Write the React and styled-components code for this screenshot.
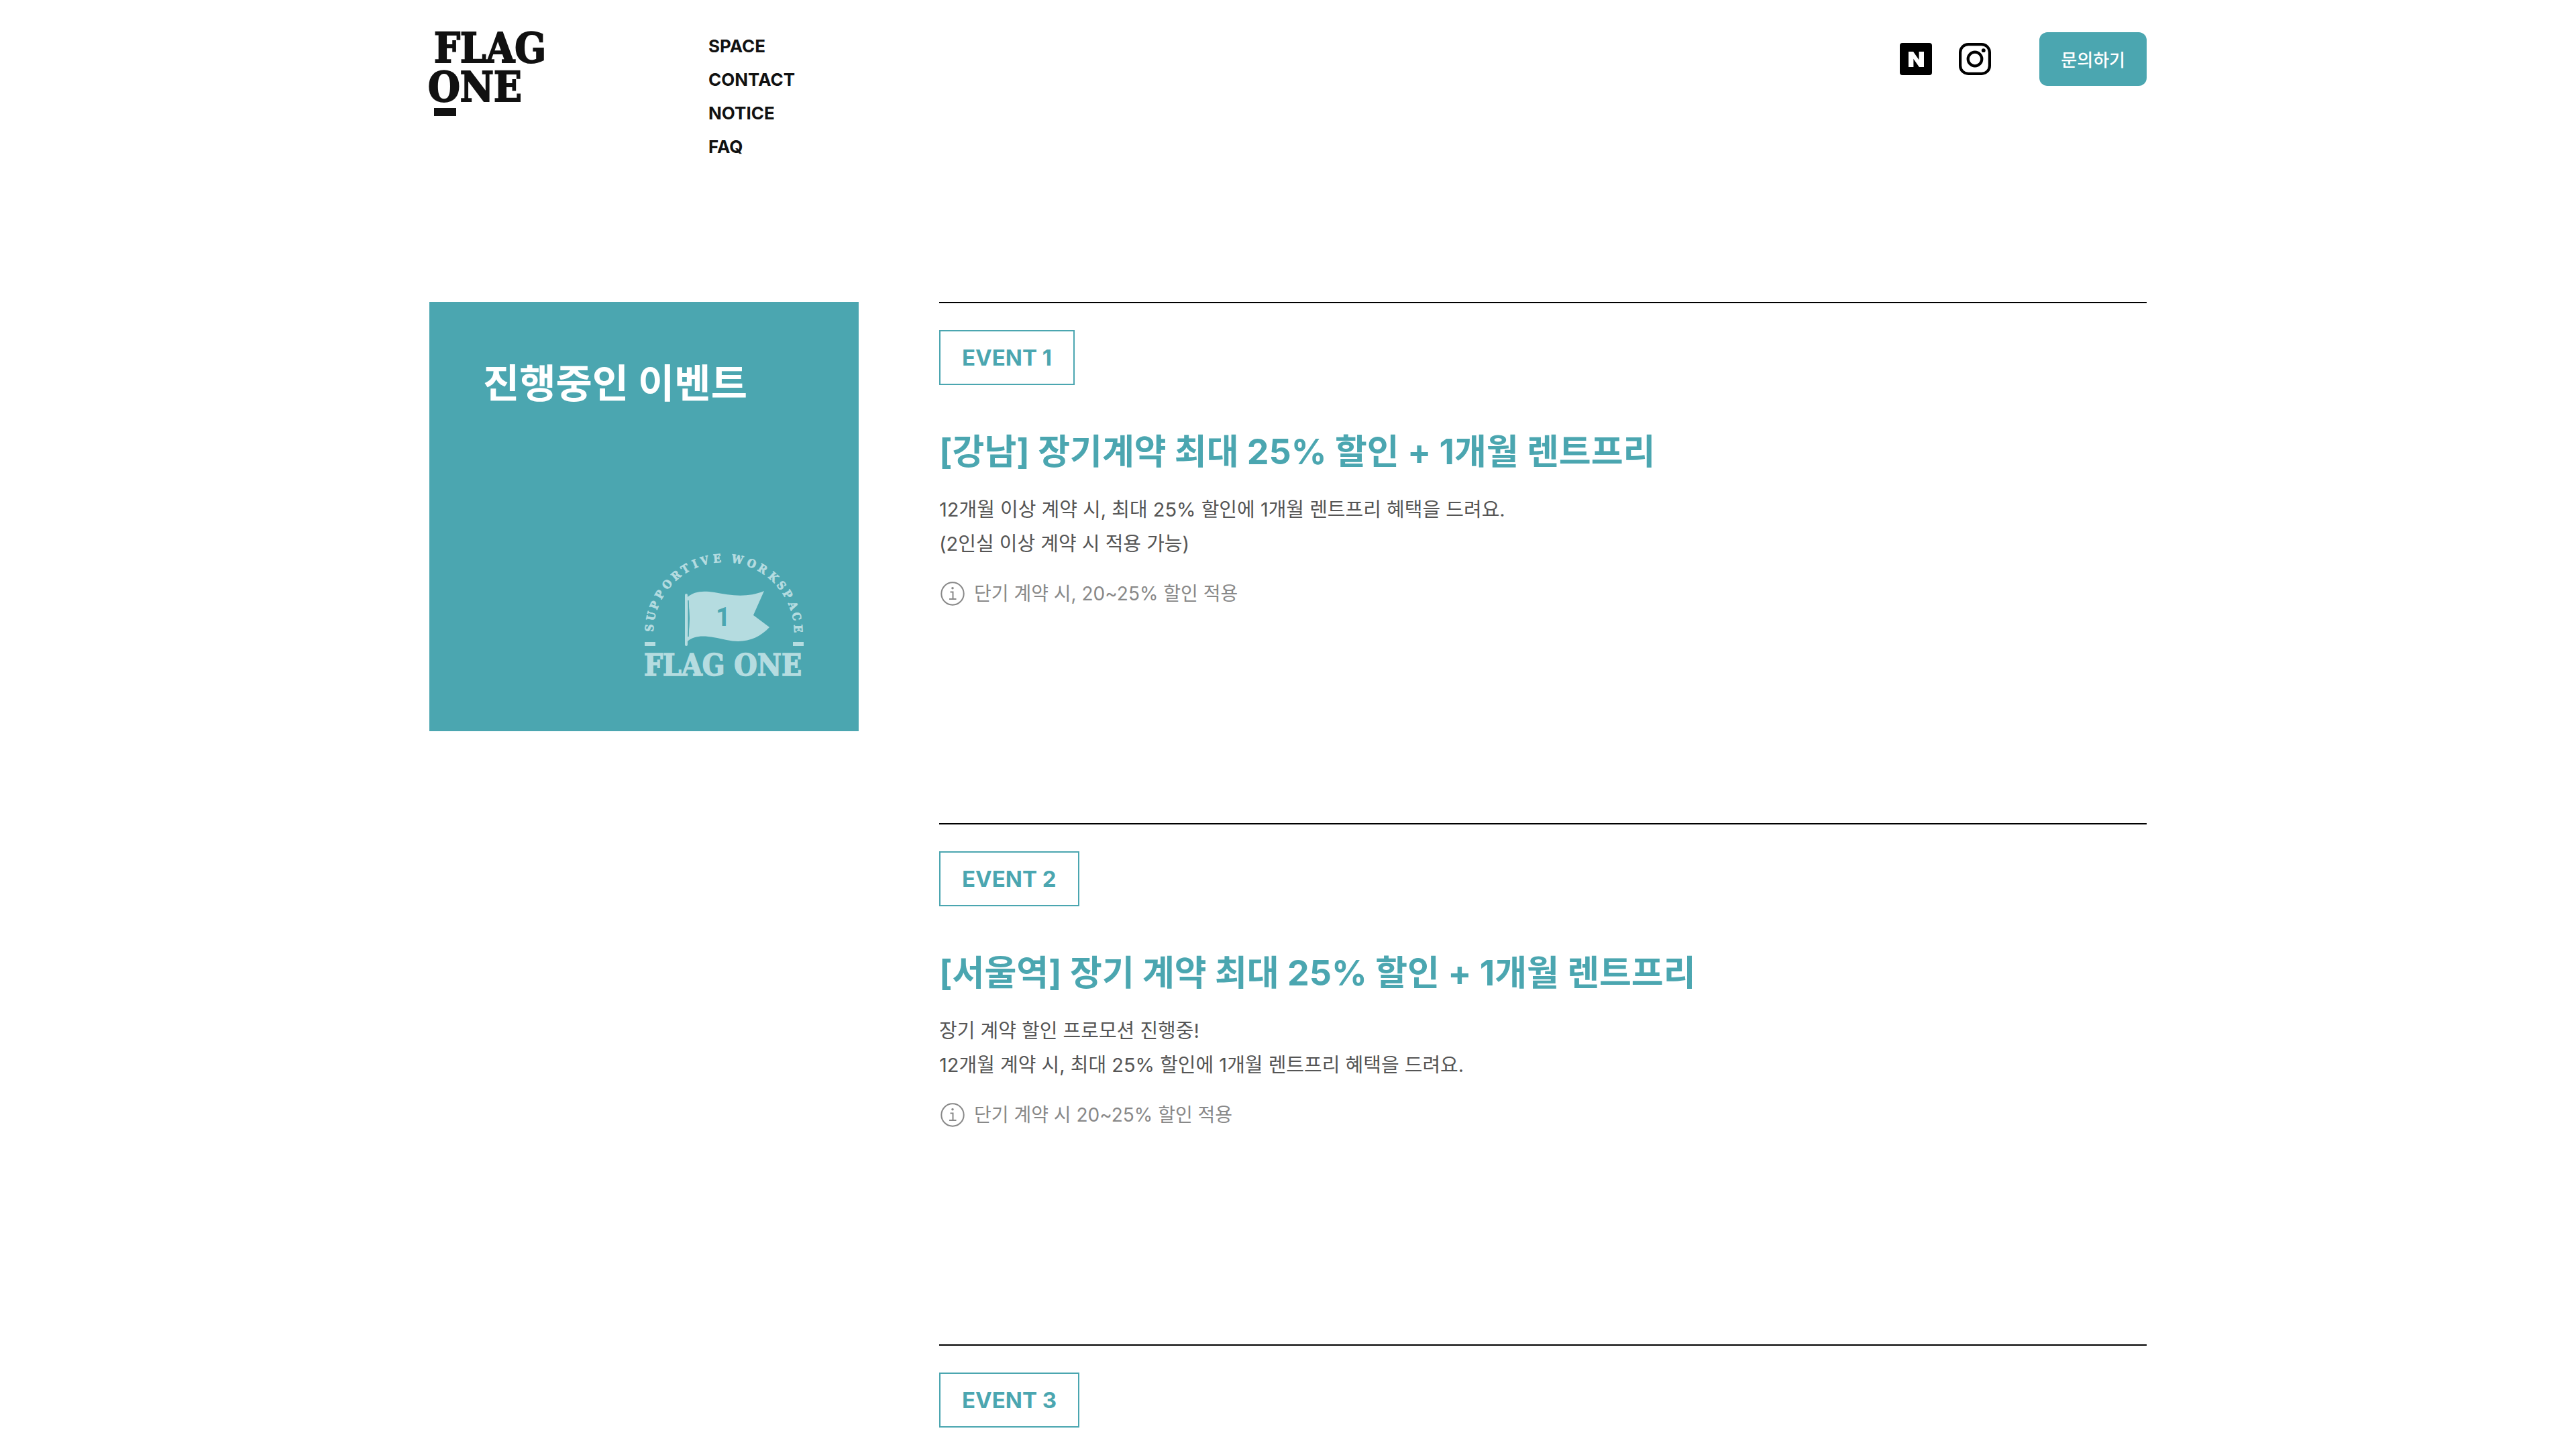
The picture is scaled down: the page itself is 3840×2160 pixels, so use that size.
import React from 'react';
import styled, { createGlobalStyle } from 'styled-components';
import { SiNaver } from 'react-icons/si';

const menus = ["SPACE", "CONTACT", "NOTICE", "FAQ"]

const events = [
    {
        id: 1,
        title: "[강남] 장기계약 최대 25% 할인 + 1개월 렌트프리",
        lines: [
            "12개월 이상 계약 시, 최대 25% 할인에 1개월 렌트프리 혜택을 드려요.",
            "(2인실 이상 계약 시 적용 가능)"
        ],
        note: "단기 계약 시, 20~25% 할인 적용"
    },
    {
        id: 2,
        title: "[서울역] 장기 계약 최대 25% 할인 + 1개월 렌트프리",
        lines: [
            "장기 계약 할인 프로모션 진행중!",
            "12개월 계약 시, 최대 25% 할인에 1개월 렌트프리 혜택을 드려요."
        ],
        note: "단기 계약 시 20~25% 할인 적용"
    },
    { id: 3 }
]

export default function App () {
    return (
        <>
            <GlobalStyle />
            <Header />
            <Main>
                <Side>
                    <SideTitle>진행중인 이벤트</SideTitle>
                    <Emblem />
                </Side>
                <EventList>
                    {events.map((event) => <Event key={event.id} event={event} />)}
                </EventList>
            </Main>
        </>
    )
}

function Header () {
    return (
        <HeaderBar>
            <LogoLink href="#" aria-label="FLAG ONE">
                <Logo />
            </LogoLink>
            <Nav>
                {menus.map((menu) => <NavLink key={menu} href={`#${menu.toLowerCase()}`}>{menu}</NavLink>)}
            </Nav>
            <Actions>
                <NaverLink href="#naver" aria-label="Naver">
                    <SiNaver />
                </NaverLink>
                <IconLink href="#instagram" aria-label="Instagram">
                    <InstagramIcon />
                </IconLink>
                <ContactButton type="button">문의하기</ContactButton>
            </Actions>
        </HeaderBar>
    )
}

function Event (props) {

    const { id, title, lines, note } = props.event

    return (
        <EventItem>
            <Badge>EVENT {id}</Badge>
            {title && (
                <>
                    <EventTitle>{title}</EventTitle>
                    <Description>
                        {lines.map((line) => <p key={line}>{line}</p>)}
                    </Description>
                    <Note>
                        <InfoIcon />
                        {note}
                    </Note>
                </>
            )}
        </EventItem>
    )
}

function Logo () {
    return (
        <LogoSvg width="180" height="128" viewBox="0 0 180 128" fill="#111" stroke="#111">
            <LogoText x="7" y="45" size={61} strokeWidth="2">FLAG</LogoText>
            <LogoText x="-2" y="103" size={61} strokeWidth="2">ONE</LogoText>
            <rect x="7" y="113" width="33" height="12" stroke="none" />
        </LogoSvg>
    )
}

function InstagramIcon () {
    return (
        <svg width="48" height="48" viewBox="0 0 48 48" fill="none" stroke="#000" strokeWidth="4.2">
            <rect x="2.1" y="2.1" width="43.8" height="43.8" rx="12" />
            <circle cx="24" cy="24" r="10.3" />
            <circle cx="36.8" cy="11.2" r="2.9" fill="#000" stroke="none" />
        </svg>
    )
}

function InfoIcon () {
    return (
        <svg width="40" height="40" viewBox="0 0 40 40" fill="none" stroke="#888" strokeWidth="2">
            <circle cx="20" cy="20" r="16.7" />
            <path d="M16.5 17.5h4V28M15 28h10.5" />
            <circle cx="20" cy="11.7" r="1.8" fill="#888" stroke="none" />
        </svg>
    )
}

// [letter, angle on the arc from the left end, advance in em]
const arc = [
    ["S", 3.6, .65], ["U", 12.8, .78], ["P", 21.6, .68], ["P", 30.8, .68], ["O", 40.4, .78],
    ["R", 50, .74], ["T", 58.9, .67], ["I", 67.2, .42], ["V", 75.1, .69], ["E", 84.8, .69],
    ["W", 100.5, 1.01], ["O", 111.9, .78], ["R", 121.4, .74], ["K", 131.7, .78], ["S", 140.7, .65],
    ["P", 149, .68], ["A", 158.8, .7], ["C", 167.5, .72], ["E", 176.9, .69]
]

function Emblem () {
    const size = 17
    const radius = 105
    const glyphs = arc.map(([letter, angle, advance]) => {
        const rad = angle * Math.PI / 180
        const half = advance * size / 2
        return {
            letter,
            x: 119 - radius * Math.cos(rad) - half * Math.sin(rad),
            y: 119 - radius * Math.sin(rad) + half * Math.cos(rad),
            rotate: angle - 90
        }
    })

    return (
        <EmblemSvg width="240" height="188" viewBox="0 -2 240 188" fill="#b5dce0">
            <LogoText
                size={size}
                stroke="#b5dce0"
                strokeWidth="0.7"
                x={glyphs.map((glyph) => glyph.x.toFixed(2)).join(" ")}
                y={glyphs.map((glyph) => glyph.y.toFixed(2)).join(" ")}
                rotate={glyphs.map((glyph) => glyph.rotate.toFixed(1)).join(" ")}
            >
                {glyphs.map((glyph) => glyph.letter).join("")}
            </LogoText>
            <rect x="1" y="133" width="16" height="6" />
            <rect x="222" y="133" width="16" height="6" />
            <rect x="61" y="61" width="4" height="78" rx="2" />
            <path d="M65 66C74 58 86 56 105 59C130 64 155 67 179 57L163 93L187 111C171 128 150 136 123 130C100 125 78 120 65 132Z" />
            <path d="M66 71Q69 98 66 125Z" fill="#4ba6b0" stroke="#4ba6b0" strokeWidth="1" />
            <FlagNumber x="118" y="109">1</FlagNumber>
            <LogoText x="0" y="183" size={44} stroke="#b5dce0" strokeWidth="1.4">FLAG ONE</LogoText>
        </EmblemSvg>
    )
}

//styled components

const GlobalStyle = createGlobalStyle `
    * {
        box-sizing: border-box;
        margin: 0;
        padding: 0;
    }

    body {
        background: #fff;
        color: #111;
        font-family: Inter, "Noto Sans CJK KR", sans-serif;
    }

    a {
        color: inherit;
        text-decoration: none;
    }
`

const HeaderBar = styled.header `
    display: flex;
    align-items: flex-start;
    max-width: 2560px;
    margin: 0 auto;
    padding-top: 48px;
`

const LogoLink = styled.a `
    width: 416px;
`

const LogoSvg = styled.svg `
    display: block;
    overflow: visible;
`

const LogoText = styled.text `
    font-family: "DejaVu Serif Condensed", "DejaVu Serif", serif;
    font-size: ${props => props.size}px;
    font-weight: 700;
`

const Nav = styled.nav `
    display: flex;
    flex-direction: column;
    margin-top: -4px;
`

const NavLink = styled.a `
    font-size: 26px;
    font-weight: 700;
    line-height: 50px;
`

const Actions = styled.div `
    display: flex;
    align-items: center;
    gap: 40px;
    margin-left: auto;
`

const IconLink = styled.a `
    display: flex;
    align-items: center;
    justify-content: center;
    width: 48px;
    height: 48px;
`

const NaverLink = styled(IconLink) `
    background: #000;
    border-radius: 4px;
    color: #fff;
    font-size: 23px;
`

const ContactButton = styled.button `
    height: 80px;
    margin-left: 32px;
    padding: 0 32px 2px;
    border: none;
    border-radius: 12px;
    background: #4ba6b0;
    color: #fff;
    font-family: inherit;
    font-size: 26px;
    font-weight: 500;
`

const Main = styled.main `
    display: grid;
    grid-template-columns: 25% 1fr;
    gap: 120px;
    align-items: start;
    max-width: 2560px;
    margin: 206px auto 0;
`

const Side = styled.aside `
    display: flex;
    flex-direction: column;
    justify-content: space-between;
    aspect-ratio: 1;
    padding: 80px;
    background: #4ba6b0;
`

const SideTitle = styled.h1 `
    color: #fff;
    font-size: 59px;
    font-weight: 700;
    line-height: 84px;
`

const EmblemSvg = styled.svg `
    align-self: flex-end;
    overflow: visible;
`

const FlagNumber = styled.text `
    fill: #4ba6b0;
    font-family: Roboto, sans-serif;
    font-size: 38px;
    font-weight: 700;
    text-anchor: middle;
`

const EventList = styled.section `
    display: flex;
    flex-direction: column;
    gap: 320px;
`

const EventItem = styled.article `
    display: flex;
    flex-direction: column;
    align-items: flex-start;
    padding-top: 40px;
    border-top: 2px solid #000;
`

const Badge = styled.span `
    padding: 0 32px;
    border: 2px solid #4ba6b0;
    color: #4ba6b0;
    font-size: 33px;
    font-weight: 700;
    line-height: 78px;
`

const EventTitle = styled.h2 `
    margin-top: 62px;
    color: #4ba6b0;
    font-size: 52px;
    font-weight: 700;
    line-height: 76px;
`

const Description = styled.div `
    margin-top: 22px;
    color: #555;
    font-size: 29px;
    line-height: 51px;
`

const Note = styled.p `
    display: flex;
    align-items: center;
    gap: 12px;
    margin-top: 27px;
    color: #888;
    font-size: 28px;
    line-height: 44px;
`
